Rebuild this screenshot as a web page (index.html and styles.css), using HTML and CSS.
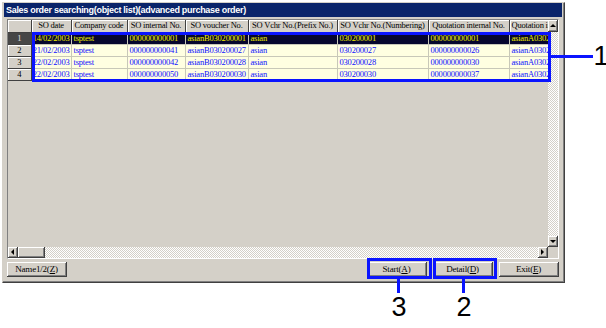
FILE: index.html
```html
<!DOCTYPE html>
<html>
<head>
    <title>Sales order searching</title>
    <link rel="stylesheet" href="styles.css">
</head>
<body>
    <div class="stage">

        <div class="window">
            <div class="titlebar">Sales order searching(object list)(advanced purchase order)</div>

            <div class="grid">
                <div class="viewport">
                    <table class="list">
                        <colgroup>
                            <col style="width:23px">
                            <col style="width:40px">
                            <col style="width:56px">
                            <col style="width:58px">
                            <col style="width:63px">
                            <col style="width:89px">
                            <col style="width:91px">
                            <col style="width:81px">
                            <col style="width:80px">
                        </colgroup>
                        <tr>
                            <th></th>
                            <th>SO date</th>
                            <th>Company code</th>
                            <th>SO internal No.</th>
                            <th>SO voucher No.</th>
                            <th>SO Vchr No.(Prefix No.)</th>
                            <th>SO Vchr No.(Numbering)</th>
                            <th>Quotation internal No.</th>
                            <th class="left">Quotation internal No.</th>
                        </tr>
                        <tr class="selected">
                            <th class="rowhead">1</th>
                            <td><div class="clip">14/02/2003</div></td>
                            <td>tsptest</td>
                            <td>000000000001</td>
                            <td>asianB030200001</td>
                            <td>asian</td>
                            <td>030200001</td>
                            <td>000000000001</td>
                            <td>asianA030200001</td>
                        </tr>
                        <tr>
                            <th class="rowhead">2</th>
                            <td><div class="clip">21/02/2003</div></td>
                            <td>tsptest</td>
                            <td>000000000041</td>
                            <td>asianB030200027</td>
                            <td>asian</td>
                            <td>030200027</td>
                            <td>000000000026</td>
                            <td>asianA030200026</td>
                        </tr>
                        <tr>
                            <th class="rowhead">3</th>
                            <td><div class="clip">22/02/2003</div></td>
                            <td>tsptest</td>
                            <td>000000000042</td>
                            <td>asianB030200028</td>
                            <td>asian</td>
                            <td>030200028</td>
                            <td>000000000030</td>
                            <td>asianA030200030</td>
                        </tr>
                        <tr>
                            <th class="rowhead">4</th>
                            <td><div class="clip">22/02/2003</div></td>
                            <td>tsptest</td>
                            <td>000000000050</td>
                            <td>asianB030200030</td>
                            <td>asian</td>
                            <td>030200030</td>
                            <td>000000000037</td>
                            <td>asianA030200037</td>
                        </tr>
                    </table>
                </div>

                <div class="vscroll">
                    <span class="arrow"><i class="tri up"></i></span>
                    <span class="track"></span>
                    <span class="arrow"><i class="tri down"></i></span>
                </div>

                <div class="hscroll">
                    <span class="arrow"><i class="tri left"></i></span>
                    <span class="thumb"></span>
                    <span class="track"></span>
                    <span class="arrow"><i class="tri right"></i></span>
                </div>

                <div class="corner"></div>
            </div>

            <div class="buttons">
                <button class="btn">Name1/2(<u>Z</u>)</button>
                <span class="spacer"></span>
                <button class="btn">Start(<u>A</u>)</button>
                <button class="btn">Detail(<u>D</u>)</button>
                <button class="btn">Exit(<u>E</u>)</button>
            </div>
        </div>

        <!-- callouts -->
        <div class="mark box-list"></div>
        <div class="mark line-list"></div>
        <div class="label label-1">1</div>

        <div class="mark box-start"></div>
        <div class="mark line-start"></div>
        <div class="label label-3">3</div>

        <div class="mark box-detail"></div>
        <div class="mark line-detail"></div>
        <div class="label label-2">2</div>

    </div>
</body>
</html>
```

FILE: styles.css
```css
body{
    margin: 0;
    background: #fff;
}

.stage{
    position: relative;
    width: 606px;
    height: 328px;
    overflow: hidden;
}

.window{
    position: absolute;
    left: 2px;
    top: 2px;
    width: 563px;
    height: 281px;
    box-sizing: border-box;
    padding: 0 2px 2px 1px;
    background: #d4d0c8;
    border: 1px solid;
    border-color: #d4d0c8 #404040 #404040 #d4d0c8;
    box-shadow: inset -1px -1px #808080;
    display: flex;
    flex-direction: column;
}

.titlebar{
    height: 14px;
    line-height: 14px;
    padding-left: 2px;
    background: #0a246a;
    color: #fff;
    font-family: "Liberation Sans", Arial, sans-serif;
    font-weight: bold;
    font-size: 9px;
    letter-spacing: -0.3px;
    white-space: nowrap;
}

/* list + scroll bars */
.grid{
    margin: 2px 3px 0 3px;
    height: 240px;
    box-sizing: border-box;
    border: 1px solid;
    border-color: #808080 #fff #fff #808080;
    display: grid;
    grid-template-columns: 1fr 10px;
    grid-template-rows: 1fr 11px;
}

.viewport{
    overflow: hidden;
    background: #d4d0c8;
}

.list{
    table-layout: fixed;
    border-collapse: collapse;
    width: 581px;
    font-family: "Liberation Serif", "Times New Roman", serif;
    font-size: 8.5px;
    letter-spacing: -0.2px;
}

.list th,
.list td{
    height: 12px;
    padding: 0 0 0 2px;
    white-space: nowrap;
    overflow: hidden;
    box-sizing: border-box;
    line-height: 11px;
}

.list th{
    font-weight: normal;
    color: #000;
    text-align: center;
    padding: 0;
    background: #d4d0c8;
    border-right: 1px solid #404040;
    border-bottom: 1px solid #404040;
    box-shadow: inset 1px 1px #fff;
}

.list th.left{
    text-align: left;
    padding-left: 2px;
}

.list tr:first-child th{
    height: 12px;
}

.list td{
    background: #ffffe1;
    color: #1010ff;
    border-right: 1px solid #c8c8b8;
    border-bottom: 1px solid #c8c8b8;
}

.list .selected td{
    background: #06062e;
    color: #f0f000;
}

.list .selected .rowhead{
    background: repeating-conic-gradient(#1c1c1c 0 25%, #707070 0 50%) 0 0/2px 2px;
    color: #e0e0e0;
    box-shadow: none;
}

.clip{
    display: flex;
    justify-content: flex-end;
    overflow: hidden;
    padding-right: 1px;
}

.vscroll{
    display: flex;
    flex-direction: column;
    grid-row: 1;
    grid-column: 2;
}

.hscroll{
    display: flex;
    grid-row: 2;
    grid-column: 1;
}

.corner{
    background: #d4d0c8;
}

.arrow{
    flex: none;
    width: 10px;
    height: 11px;
    box-sizing: border-box;
    background: #d4d0c8;
    border-right: 1px solid #404040;
    border-bottom: 1px solid #404040;
    box-shadow: inset 1px 1px #fff, inset -1px -1px #808080;
    display: flex;
    align-items: center;
    justify-content: center;
}

.vscroll .arrow:first-child{
    height: 12px;
}

.track{
    flex: 1;
    background: repeating-conic-gradient(#fff 0 25%, #d4d0c8 0 50%) 0 0/2px 2px;
}

.thumb{
    flex: none;
    width: 27px;
    box-sizing: border-box;
    background: #d4d0c8;
    border-right: 1px solid #404040;
    border-bottom: 1px solid #404040;
    box-shadow: inset 1px 1px #fff, inset -1px -1px #808080;
}

.tri{
    width: 0;
    height: 0;
    border: 3px solid transparent;
}

.tri.up{
    border-bottom-color: #000;
    border-top-width: 0;
}

.tri.down{
    border-top-color: #000;
    border-bottom-width: 0;
}

.tri.left{
    border-right-color: #000;
    border-left-width: 0;
}

.tri.right{
    border-left-color: #000;
    border-right-width: 0;
}

/* bottom buttons */
.buttons{
    display: flex;
    gap: 6px;
    margin: 3px 3px 0 3px;
}

.spacer{
    flex: 1;
}

.btn{
    width: 60px;
    height: 15px;
    padding: 0;
    box-sizing: border-box;
    background: #d4d0c8;
    border: none;
    border-right: 1px solid #404040;
    border-bottom: 1px solid #404040;
    box-shadow: inset 1px 1px #fff, inset -1px -1px #808080;
    font-family: "Liberation Serif", "Times New Roman", serif;
    font-size: 9px;
    letter-spacing: -0.2px;
    color: #000;
}

/* callouts over the screenshot */
.mark{
    position: absolute;
    box-sizing: border-box;
}

.box-list,
.box-start,
.box-detail{
    border: 3px solid #0a14ff;
}

.line-list,
.line-start,
.line-detail{
    background: #0a14ff;
}

.box-list{
    left: 32px;
    top: 32px;
    width: 519px;
    height: 50px;
}

.line-list{
    left: 550px;
    top: 55px;
    width: 43px;
    height: 3px;
}

.box-start{
    left: 367px;
    top: 258px;
    width: 65px;
    height: 21px;
}

.line-start{
    left: 397px;
    top: 278px;
    width: 3px;
    height: 15px;
}

.box-detail{
    left: 433px;
    top: 258px;
    width: 64px;
    height: 21px;
}

.line-detail{
    left: 462px;
    top: 278px;
    width: 3px;
    height: 15px;
}

.label{
    position: absolute;
    width: 20px;
    text-align: center;
    font-family: "Liberation Sans", Arial, sans-serif;
    font-size: 27px;
    line-height: 1;
    color: #000;
}

.label-1{
    left: 591px;
    top: 43px;
}

.label-3{
    left: 389px;
    top: 294px;
}

.label-2{
    left: 454px;
    top: 294px;
}
```
